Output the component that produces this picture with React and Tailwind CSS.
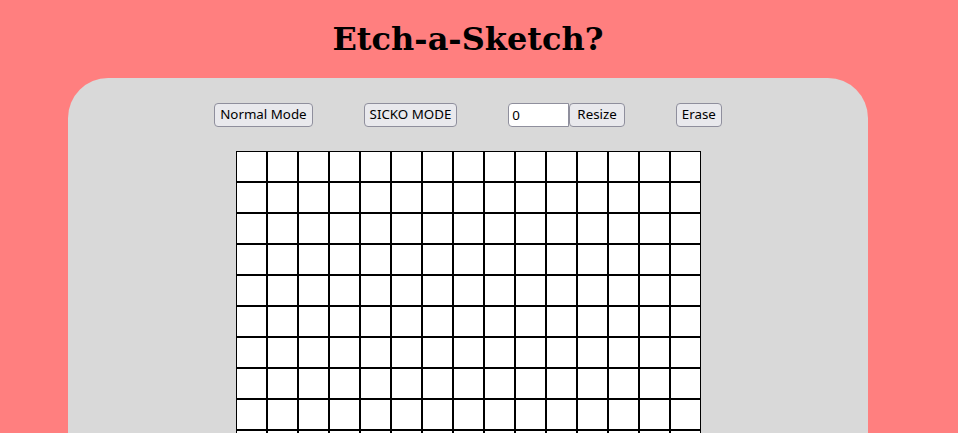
export default function App() {
  const cells = Array.from({ length: 225 });

  return (
    <div className="min-h-screen bg-[#ff7f7f] overflow-hidden">
      <div className="w-[936px] flex flex-col items-center">
        {/* Title */}
        <h1 className="mt-[21px] mb-[20px] text-[32px] leading-[37px] font-bold text-black font-['DejaVu_Serif',serif]">
          Etch-a-Sketch?
        </h1>

        {/* Board */}
        <div className="w-[800px] bg-[#d9d9d9] rounded-t-[40px] pt-[25px] pb-[40px] flex flex-col items-center font-['Noto_Sans',sans-serif] text-[13.33px]">
          <div className="flex items-center gap-[51px]">
            <button className="h-[24px] px-[5px] bg-[#e9e9ed] border border-[#8f8f9d] rounded-[4px] text-black">
              Normal Mode
            </button>
            <button className="h-[24px] px-[5px] bg-[#e9e9ed] border border-[#8f8f9d] rounded-[4px] text-black">
              SICKO MODE
            </button>
            <div className="flex items-center">
              <input
                type="text"
                defaultValue="0"
                className="w-[61px] h-[24px] px-[3px] bg-white border border-[#8f8f9d] rounded-l-[4px] text-black outline-none"
              />
              <button className="h-[24px] px-[7px] bg-[#e9e9ed] border border-[#8f8f9d] rounded-[4px] text-black">
                Resize
              </button>
            </div>
            <button className="h-[24px] px-[5px] bg-[#e9e9ed] border border-[#8f8f9d] rounded-[4px] text-black">
              Erase
            </button>
          </div>

          {/* Grid */}
          <div className="mt-[24px] grid grid-cols-[repeat(15,31px)]">
            {cells.map((_, i) => (
              <div key={i} className="w-[31px] h-[31px] bg-white border border-black" />
            ))}
          </div>
        </div>
      </div>
    </div>
  );
}
